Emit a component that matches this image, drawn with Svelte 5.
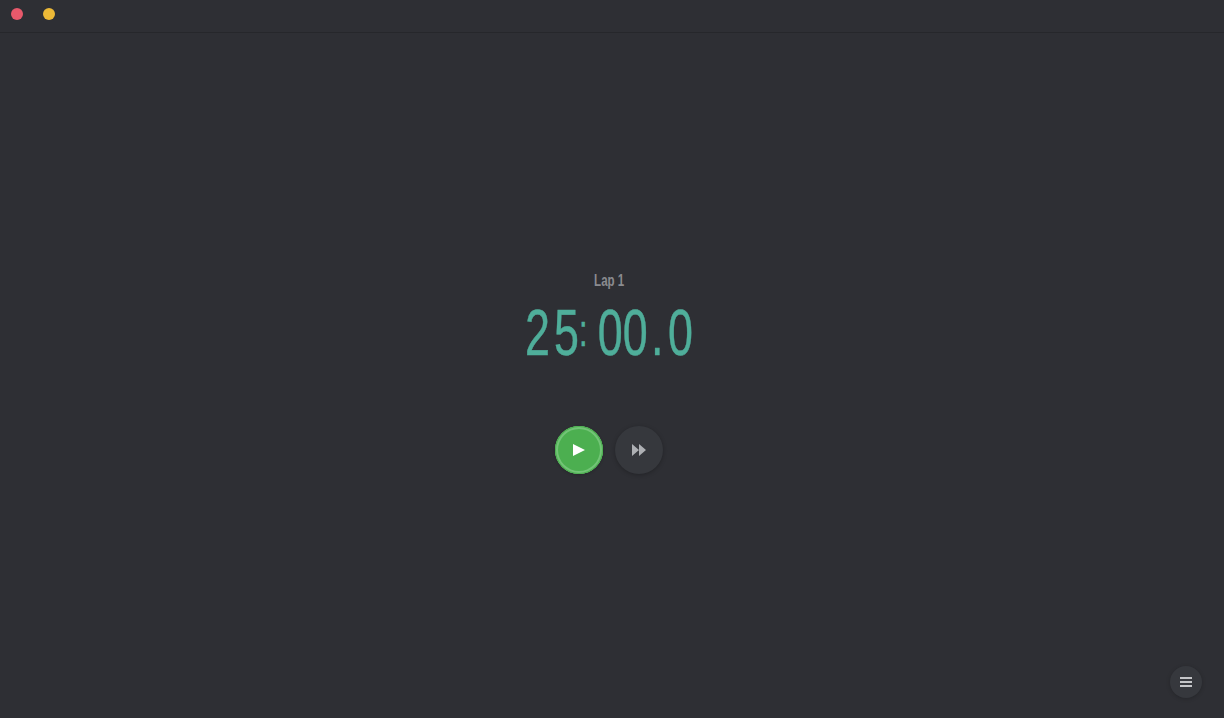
<script>
  let lap = 1;
</script>

<div class="window">
  <header class="titlebar">
    <span class="dot close"></span>
    <span class="dot minimize"></span>
  </header>

  <main class="timer">
    <p class="lap">Lap {lap}</p>
    <div class="clock">
      <span class="tens">2</span><span>5</span><span class="colon">:</span><span>00</span><span class="point">.</span><span>0</span>
    </div>
    <div class="controls">
      <button type="button" class="round play" aria-label="Start">
        <svg width="12" height="12" viewBox="0 0 12 12"><path d="M0 0 12 6 0 12z" fill="#fff" /></svg>
      </button>
      <button type="button" class="round skip" aria-label="Skip">
        <svg width="14" height="12" viewBox="0 0 14 12"><path d="M0 0 7 6 0 12zM7 0 14 6 7 12z" fill="#aeb0b4" /></svg>
      </button>
    </div>
  </main>

  <footer class="footer">
    <button type="button" class="menu" aria-label="Menu">
      <span></span><span></span><span></span>
    </button>
  </footer>
</div>

<style>
  :global(body) {
    background: #2e2f34;
  }

  .window {
    height: 718px;
    display: flex;
    flex-direction: column;
    background: #2e2f34;
    font-family: "Liberation Sans", sans-serif;
  }

  .titlebar {
    height: 33px;
    display: flex;
    align-items: center;
    gap: 20px;
    padding: 0 11px 5px;
    box-sizing: border-box;
    border-bottom: 1px solid #26272b;
    flex: none;
  }

  .dot {
    width: 12px;
    height: 12px;
    border-radius: 50%;
  }

  .close {
    background: #e8596b;
  }

  .minimize {
    background: #ecb937;
  }

  .timer {
    flex: 1;
    display: flex;
    flex-direction: column;
    align-items: center;
    padding: 236px 6px 0 0;
  }

  .lap {
    margin: 0;
    font-size: 17px;
    line-height: 24px;
    font-weight: 700;
    color: #8a8b8f;
    transform: scaleX(0.68);
  }

  .clock {
    margin-top: 2px;
    height: 71px;
    line-height: 71px;
    font-size: 64px;
    color: #4fae9a;
    white-space: nowrap;
    -webkit-text-stroke: 0.5px #4fae9a;
    transform: scaleX(0.7);
  }

  .tens {
    margin-right: 6px;
  }

  .colon {
    font-size: 44px;
    vertical-align: 9px;
    margin-right: 14.5px;
  }

  .point {
    margin: 0 6.5px 0 5px;
  }

  .controls {
    margin-top: 60px;
    display: flex;
    gap: 12px;
  }

  .round {
    width: 48px;
    height: 48px;
    border: none;
    border-radius: 50%;
    padding: 0;
    display: flex;
    align-items: center;
    justify-content: center;
    box-sizing: border-box;
  }

  .play {
    background: #4caf50;
    box-shadow: inset 0 0 0 1px #4caf50, inset 0 0 0 3px #72c476, 0 1px 3px rgba(0, 0, 0, 0.2);
  }

  .skip {
    background: #36383d;
    box-shadow: 0 1px 4px rgba(0, 0, 0, 0.25);
  }

  .footer {
    flex: none;
    display: flex;
    justify-content: flex-end;
    padding: 0 22px 20px 0;
  }

  .menu {
    width: 32px;
    height: 32px;
    border-radius: 50%;
    border: none;
    padding: 0;
    background: #36383d;
    display: flex;
    flex-direction: column;
    align-items: center;
    justify-content: center;
    gap: 2px;
    box-shadow: 0 1px 4px rgba(0, 0, 0, 0.2);
  }

  .menu span {
    width: 12px;
    height: 2px;
    background: #c4c5c8;
  }
</style>
